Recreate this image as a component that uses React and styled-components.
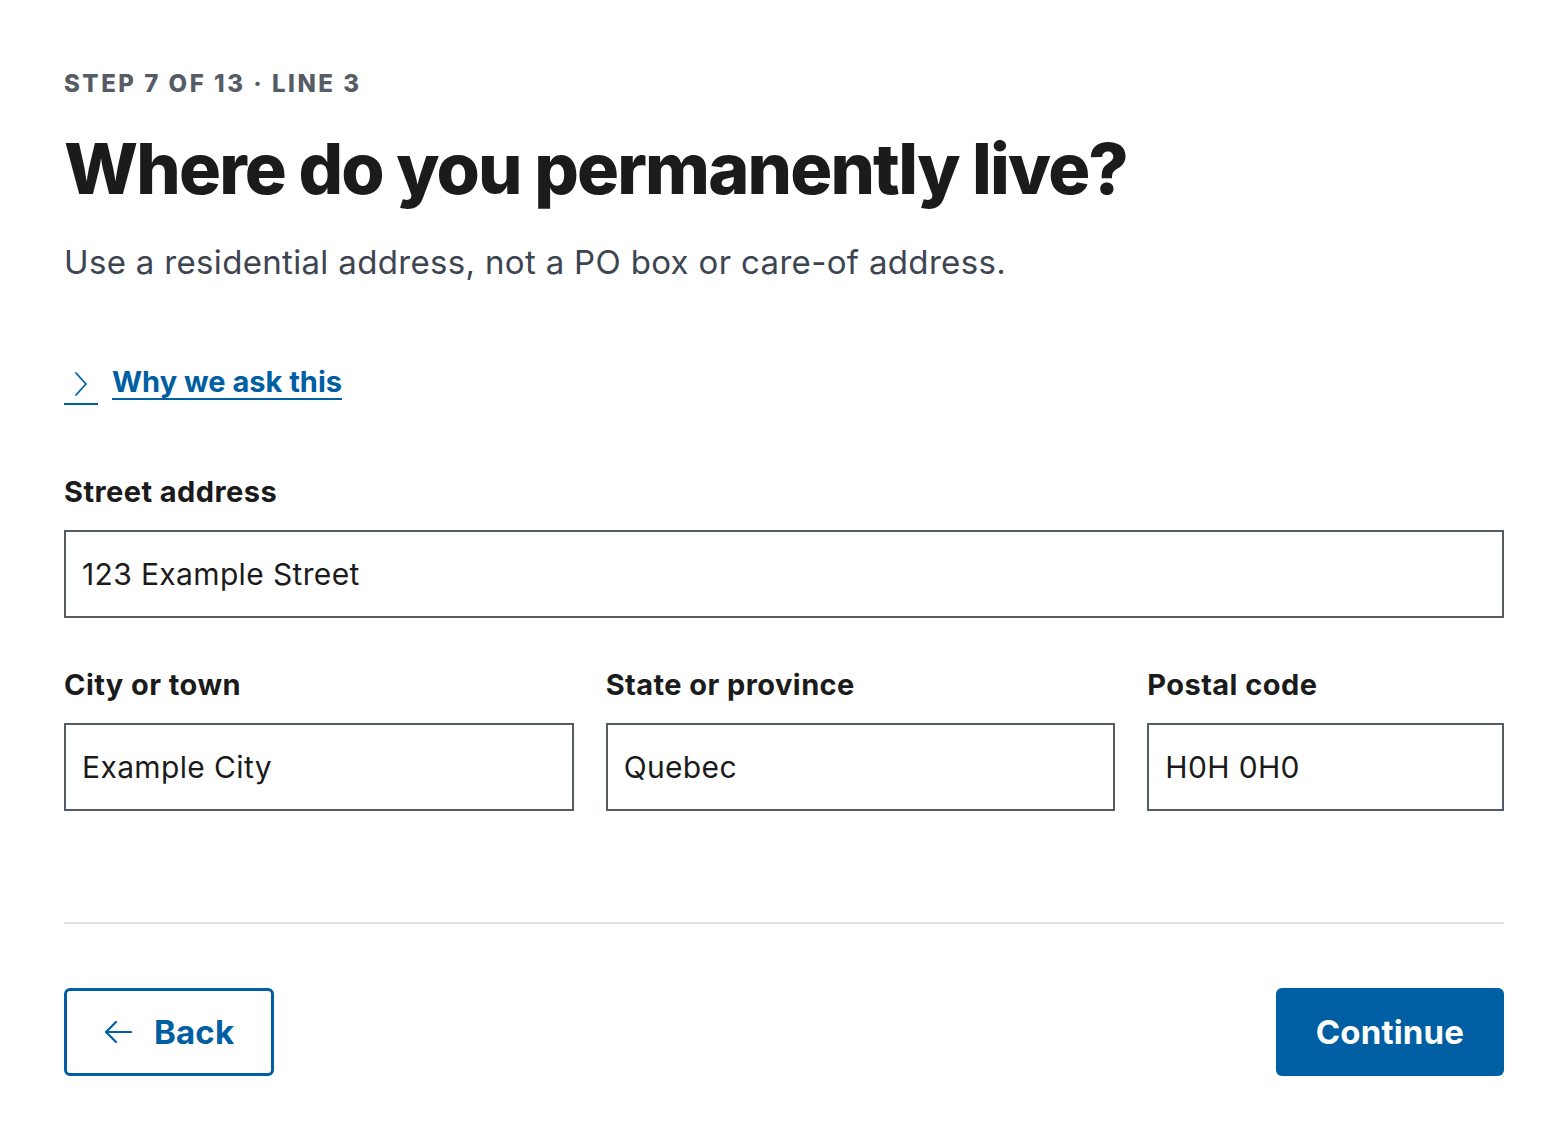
import React from "react";
import styled, { createGlobalStyle } from "styled-components";

const Global = createGlobalStyle`
  html, body { margin: 0; padding: 0; background: #ffffff; }
  body { font-family: Inter, "Noto Sans", sans-serif; color: #1b1b1b; }
  * { box-sizing: border-box; }
`;

const Page = styled.main`
  padding: 68px 64px 64px;
  display: flex;
  flex-direction: column;
`;

const Step = styled.div`
  font-size: 24px;
  line-height: 32px;
  font-weight: 800;
  letter-spacing: 0.105em;
  text-transform: uppercase;
  color: #565c65;
`;

const Heading = styled.h1`
  margin: 28px 0 0;
  font-size: 70px;
  line-height: 81px;
  font-weight: 800;
  letter-spacing: -0.026em;
  color: #1b1b1b;
`;

const Lead = styled.p`
  margin: 31px 0 0;
  font-size: 33px;
  line-height: 45px;
  letter-spacing: 0.01em;
  color: #3d4551;
`;

const Disclosure = styled.button`
  margin-top: 76px;
  align-self: flex-start;
  display: flex;
  align-items: flex-start;
  gap: 14px;
  padding: 0;
  border: 0;
  background: none;
  cursor: pointer;
  font-family: inherit;
  color: #005ea2;
`;

const ChevronBox = styled.span`
  width: 34px;
  height: 44px;
  display: flex;
  align-items: center;
  justify-content: center;
  border-bottom: 2px solid #005ea2;
  padding-top: 4px;
`;

const LinkText = styled.span`
  font-size: 29px;
  line-height: 41px;
  font-weight: 700;
  text-decoration: underline;
  text-decoration-thickness: 2px;
  text-underline-offset: 6px;
`;

const Field = styled.label`
  display: flex;
  flex-direction: column;
  gap: 19px;
  margin-top: ${(p) => p.$top || 0}px;
`;

const Label = styled.span`
  font-size: 29px;
  line-height: 39px;
  font-weight: 700;
  letter-spacing: 0.015em;
  color: #1b1b1b;
`;

const Input = styled.input`
  height: 88px;
  width: 100%;
  border: 2px solid #565c65;
  border-radius: 0;
  padding: 0 16px;
  font-family: Inter, "Noto Sans", sans-serif;
  font-size: 30px;
  letter-spacing: 0.012em;
  color: #1b1b1b;
  background: #fff;
  outline: none;
`;

const Row = styled.div`
  display: grid;
  grid-template-columns: 10fr 10fr 7fr;
  gap: 32px;
  margin-top: 47px;
`;

const Divider = styled.hr`
  margin: 111px 0 0;
  border: 0;
  border-top: 2px solid #dfe1e2;
`;

const Actions = styled.div`
  margin-top: 64px;
  display: flex;
  justify-content: space-between;
  align-items: center;
`;

const Button = styled.button`
  height: 88px;
  padding: 0 ${(p) => (p.$outline ? 37 : 40)}px;
  border-radius: 6px;
  border: ${(p) => (p.$outline ? "3px solid #005ea2" : "0")};
  background: ${(p) => (p.$outline ? "#fff" : "#005ea2")};
  color: ${(p) => (p.$outline ? "#005ea2" : "#fff")};
  font-family: Inter, "Noto Sans", sans-serif;
  font-size: 33px;
  font-weight: 700;
  letter-spacing: 0.005em;
  display: inline-flex;
  align-items: center;
  gap: 22px;
  cursor: pointer;
`;

function Chevron() {
  return (
    <svg width="14" height="26" viewBox="0 0 14 26" fill="none">
      <path d="M2 2 L12 13 L2 24" stroke="#005ea2" strokeWidth="1.8" strokeLinecap="round" strokeLinejoin="round" />
    </svg>
  );
}

function ArrowLeft() {
  return (
    <svg width="28" height="24" viewBox="0 0 28 24" fill="none">
      <path d="M27 12 H2 M12 2 L2 12 L12 22" stroke="#005ea2" strokeWidth="2.2" strokeLinecap="round" strokeLinejoin="round" />
    </svg>
  );
}

export default function App() {
  return (
    <>
      <Global />
      <Page>
        <Step>Step 7 of 13 · Line 3</Step>
        <Heading>Where do you permanently live?</Heading>
        <Lead>Use a residential address, not a PO box or care-of address.</Lead>

        <Disclosure type="button">
          <ChevronBox><Chevron /></ChevronBox>
          <LinkText>Why we ask this</LinkText>
        </Disclosure>

        <Field $top={67}>
          <Label>Street address</Label>
          <Input defaultValue="123 Example Street" />
        </Field>

        <Row>
          <Field>
            <Label>City or town</Label>
            <Input defaultValue="Example City" />
          </Field>
          <Field>
            <Label>State or province</Label>
            <Input defaultValue="Quebec" />
          </Field>
          <Field>
            <Label>Postal code</Label>
            <Input defaultValue="H0H 0H0" />
          </Field>
        </Row>

        <Divider />

        <Actions>
          <Button type="button" $outline>
            <ArrowLeft />
            Back
          </Button>
          <Button type="button">Continue</Button>
        </Actions>
      </Page>
    </>
  );
}
